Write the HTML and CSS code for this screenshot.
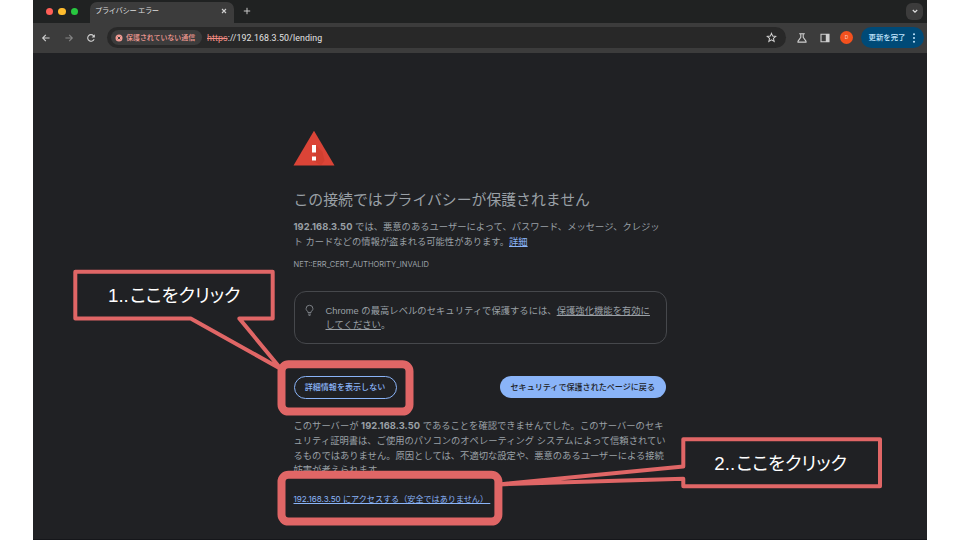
FILE: index.html
```
<!DOCTYPE html>
<html lang="ja">
<head>
<meta charset="utf-8">
<title>プライバシー エラー</title>
<link rel="stylesheet" href="styles.css">
</head>
<body>
<div class="window">
  <div class="tabbar">
    <div class="lights"><i class="light red"></i><i class="light yellow"></i><i class="light green"></i></div>
    <div class="tab">
      <span class="tab-title">プライバシー エラー</span>
      <svg class="close" viewBox="0 0 6 6"><path d="M1 1l4 4M5 1l-4 4"/></svg>
    </div>
    <svg class="plus" viewBox="0 0 8 8"><path d="M4 .8v6.4M.8 4h6.4"/></svg>
    <div class="tab-search"><svg viewBox="0 0 8 8"><path d="M1.8 3l2.2 2.1L6.2 3"/></svg></div>
  </div>
  <div class="toolbar">
    <div class="nav">
      <svg viewBox="0 0 10 10"><path d="M8.6 5H1.8M4.8 1.9L1.7 5l3.1 3.1"/></svg>
      <svg class="dim" viewBox="0 0 10 10"><path d="M1.4 5h6.8M5.2 1.9L8.3 5 5.2 8.1"/></svg>
      <svg viewBox="0 0 10 10"><path d="M8.1 6.1A3.3 3.3 0 1 1 7.5 2.8L8.2 3.6"/><path class="solid" d="M8.8 1.2v3.2H5.6z"/></svg>
    </div>
    <div class="address">
      <div class="chip">
        <svg viewBox="0 0 8 8"><circle cx="4" cy="4" r="3.5"/><path d="M2.7 2.7l2.6 2.6M5.3 2.7L2.7 5.3"/></svg>
        <span>保護されていない通信</span>
      </div>
      <span class="url"><s>https</s>://192.168.3.50/lending</span>
      <svg class="star" viewBox="0 0 12 12"><path d="M6 1.5l1.3 3 3.3.3-2.5 2.2.8 3.2L6 8.5l-2.9 1.7.8-3.2L1.4 4.8l3.3-.3z"/></svg>
    </div>
    <svg class="flask" viewBox="0 0 12 12"><path d="M3.2 1.8h5.6M4.8 2v3.4L2 9.2v.9h8v-.9L7.2 5.4V2"/></svg>
    <svg class="panel" viewBox="0 0 12 12"><path d="M2 2.2h8v7.6H2z"/><path class="solid" d="M6.8 2H10v8H6.8z"/></svg>
    <div class="avatar">D</div>
    <div class="update"><span>更新を完了</span><svg viewBox="0 0 4 12"><circle cx="2" cy="2.3" r="1"/><circle cx="2" cy="6" r="1"/><circle cx="2" cy="9.7" r="1"/></svg></div>
  </div>
  <main class="page">
    <svg class="warning" viewBox="0 0 42 36">
      <path fill="#db4437" d="M21 0.8L41.5 35.6H.5z"/>
      <path fill="#c53929" opacity=".45" d="M23 15.2l6.5 6.5 2 9-3.5 4.5-9-4.7z"/>
      <path fill="#fff" d="M19 15h4v7.6h-4zM19 26.6h4v3.9h-4z"/>
    </svg>
    <h1>この接続ではプライバシーが保護されません</h1>
    <p class="lead"><b>192.168.3.50</b> では、悪意のあるユーザーによって、パスワード、メッセージ、クレジッ<br>ト カードなどの情報が盗まれる可能性があります。<a>詳細</a></p>
    <p class="code">NET::ERR_CERT_AUTHORITY_INVALID</p>
    <div class="tip">
      <svg viewBox="0 0 10 14"><path d="M3.2 9.2V8.1C1.9 7.4 1.2 6.3 1.2 5a3.8 3.8 0 0 1 7.6 0c0 1.3-.7 2.4-2 3.1v1.1zM3.3 11h3.4M4 12.4h2"/></svg>
      <p>Chrome の最高レベルのセキュリティで保護するには、<u>保護強化機能を有効に</u><br><u>してください</u>。</p>
    </div>
    <div class="buttons">
      <button class="secondary">詳細情報を表示しない</button>
      <button class="primary">セキュリティで保護されたページに戻る</button>
    </div>
    <p class="details">このサーバーが <b>192.168.3.50</b> であることを確認できませんでした。このサーバーのセキ<br>ュリティ証明書は、ご使用のパソコンのオペレーティング システムによって信頼されてい<br>るものではありません。原因としては、不適切な設定や、悪意のあるユーザーによる接続<br>妨害が考えられます。</p>
    <a class="proceed">192.168.3.50 にアクセスする（安全ではありません）&nbsp;</a>
  </main>
</div>
<svg class="annotations" viewBox="0 0 960 540">
  <path class="callout" d="M75.3 271.7H272.7V318.5H239.3L281 369 190.7 318.5H75.3z"/>
  <path class="callout" d="M683.3 439.3H880V486.3H683.3V478.7L499 484.4 683.3 466.6z"/>
  <rect class="frame" x="281.5" y="364.3" width="128" height="47.3" rx="7"/>
  <rect class="frame" x="281.5" y="474.7" width="216.9" height="46.9" rx="7"/>
  <text x="108" y="302">1..</text><text x="130" y="302" textLength="110.5" lengthAdjust="spacingAndGlyphs">ここをクリック</text>
  <text x="714.3" y="469.7">2..</text><text x="736.5" y="469.7" textLength="110.5" lengthAdjust="spacingAndGlyphs">ここをクリック</text>
</svg>
</body>
</html>
```
FILE: styles.css
```
* { box-sizing: border-box; }
body { margin: 0; height: 540px; overflow: hidden; background: #fff; font-family: Inter, "Noto Sans CJK JP", sans-serif; }
p, h1 { margin: 0; white-space: nowrap; }
svg { display: block; flex: none; fill: none; }
.window { width: 894px; height: 540px; margin-left: 33px; background: #202124; overflow: hidden; border-bottom: 1px solid #15161a; }

.tabbar { display: flex; align-items: center; height: 23px; background: #202222; color: #c7c7c7; }
.lights { display: flex; gap: 5px; width: 57px; padding-left: 12.5px; }
.light { width: 7.5px; height: 7.5px; border-radius: 50%; }
.red { background: #ff5f57; }
.yellow { background: #febc2e; }
.green { background: #28c840; }
.tab { display: flex; align-items: center; justify-content: space-between; width: 144px; height: 21px; margin-top: 2px; padding: 0 7px 3px 5px; background: #3c3c3c; border-radius: 7px 7px 0 0; }
.tab-title { font-size: 7.3px; line-height: 12px; letter-spacing: -.38px; color: #dedede; }
.close { width: 6px; height: 6px; stroke: #d0d0d0; stroke-width: 1.1; }
.plus { width: 8px; height: 8px; margin: -1px 0 0 8.5px; stroke: #c7c7c7; stroke-width: 1; }
.tab-search { display: grid; place-items: center; width: 17px; height: 17px; margin: -1px 4px 0 auto; border-radius: 6px; background: #3c3c3c; }
.tab-search svg { width: 8px; height: 8px; stroke: #ddd; stroke-width: 1.2; }

.toolbar { display: flex; align-items: center; height: 30px; padding: 0 3px 1px 8px; background: #3c3c3c; }
.nav { display: flex; gap: 12.5px; width: 66px; }
.nav svg { width: 10px; height: 10px; stroke: #d0d0d0; stroke-width: 1.1; }
.nav .dim { stroke: #858585; }
.nav .solid { fill: #d0d0d0; stroke: none; }
.address { display: flex; align-items: center; width: 679px; height: 21.5px; padding: 0 9px 0 4px; border-radius: 11px; background: #282828; }
.chip { display: flex; align-items: center; gap: 3px; width: 91px; height: 15px; padding-left: 4px; border-radius: 8px; background: #3c3c3c; color: #f29b93; font-size: 6.95px; font-weight: 500; line-height: 12px; white-space: nowrap; }
.chip svg { width: 8px; height: 8px; fill: #f29b93; stroke: #3c3c3c; }
.chip circle { stroke: none; }
.url { margin-left: 5px; font-family: Roboto, sans-serif; font-size: 8.8px; letter-spacing: .11px; color: #e3e3e3; white-space: nowrap; }
.url s { color: #f28b82; }
.star { width: 11px; height: 11px; margin-left: auto; stroke: #d0d0d0; stroke-width: 1.1; }
.flask, .panel { width: 12px; height: 12px; stroke: #d0d0d0; stroke-width: 1.1; }
.flask { margin-left: 10px; }
.panel { margin-left: 11px; }
.panel .solid { fill: #d0d0d0; stroke: none; }
.avatar { display: grid; place-items: center; width: 13px; height: 13px; margin-left: 9px; border-radius: 50%; background: #f4511e; color: #ffd4c6; font-size: 5px; line-height: 1; }
.update { display: flex; align-items: center; justify-content: space-between; width: 63px; height: 21px; margin-left: auto; padding: 0 8px 0 7.5px; border-radius: 11px; background: #004a77; color: #c2e7ff; font-size: 7.4px; font-weight: 500; line-height: 12px; white-space: nowrap; }
.update svg { width: 4px; height: 12px; fill: #c2e7ff; }

.page { width: 373px; margin-left: 260.5px; padding-top: 77px; color: #9aa0a6; font-size: 9.3px; line-height: 14.83px; }
.warning { width: 42px; height: 36px; margin-left: -.7px; }
h1 { margin-top: 23.5px; font-size: 14.87px; line-height: 20px; font-weight: 400; }
.lead { margin-top: 10.5px; }
.lead b, .details b { letter-spacing: .08px; }
.lead a { color: #8ab4f8; text-decoration: underline; }
.code { margin-top: 8px; font-size: 7.5px; line-height: 14px; }
.tip { display: flex; gap: 11px; height: 53px; margin-top: 19px; padding: 12px 0 0 10px; border: 1px solid #46484c; border-radius: 12px; }
.tip svg { width: 9px; height: 13px; stroke: #85898e; stroke-width: 1; }
.tip p { margin-left: 1px; font-family: "Liberation Sans", "Noto Sans CJK JP", sans-serif; letter-spacing: .03px; }
.buttons { display: flex; justify-content: space-between; width: 372.5px; margin-top: 32px; height: 23px; }
button { font: 500 8.07px/12px Inter, "Noto Sans CJK JP", sans-serif; border-radius: 12px; padding: 0; white-space: nowrap; }
.secondary { width: 103px; height: 23px; border: 1.3px solid #8ab4f8; background: none; color: #8ab4f8; }
.primary { width: 166.5px; height: 22.5px; border: 0; background: #8ab4f8; color: #202124; }
.details { margin-top: 20.3px; }
.proceed { display: inline-block; margin-top: 13.5px; font-size: 8.1px; color: #8ab4f8; text-decoration: underline; white-space: nowrap; }

.annotations { position: absolute; left: 0; top: 0; width: 960px; height: 540px; }
.callout { fill: #202124; stroke: #e06666; stroke-width: 4; stroke-linejoin: round; }
.frame { stroke: #e06666; stroke-width: 8; }
.annotations text { fill: #fff; font-family: "Liberation Sans", "Noto Sans CJK JP", sans-serif; font-size: 18.7px; font-feature-settings: "palt"; }
```
